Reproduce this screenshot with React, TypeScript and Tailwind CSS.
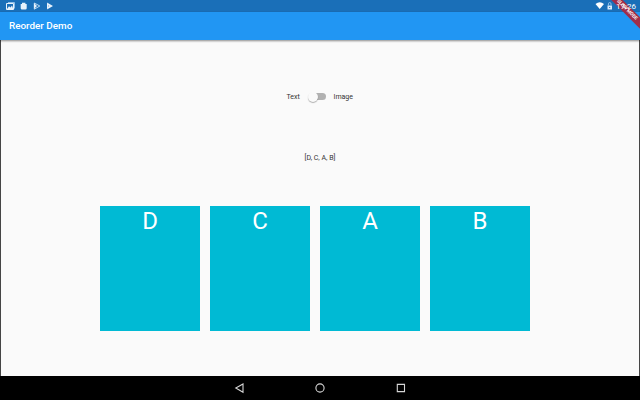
const cards = ["D", "C", "A", "B"];

function StatusBar() {
  return (
    <div className="flex h-3 shrink-0 items-center bg-[#1a6fb8] pl-[5px] text-white">
      <svg width="60" height="12" viewBox="0 0 60 12" fill="#e8f2fb">
        <path d="M3 2.5H9.5V8.5" fill="none" stroke="#8fc0ea" />
        <path d="M1.5 3.5h7v6h-7z" fill="none" stroke="#e8f2fb" />
        <path d="M2 9l2-2.8 1.5 1.2L7 5.5l1.3 3.5z" />
        <path d="M15.7 4h6v4.2q0 1.3-1.3 1.3h-3.4q-1.3 0-1.3-1.3zM17 2.7h3.4V4H17z" />
        <path d="M29.3 3l5.5 3-5.5 3.2z" fill="none" stroke="#b9d9f3" />
        <path d="M29 3l3 3-3 3z" />
        <path d="M42 2.5l6 3.5-6 3.5 1.5-3.5z" />
        <path d="M42.5 3.2v5.6" stroke="#e8f2fb" />
      </svg>
      <svg className="ml-auto" width="20" height="12" viewBox="0 0 20 12" fill="white">
        <path d="M.5 4Q4.7.7 9 4L4.7 9z" />
        <path d="M12.5 5.5h4.5v4h-4.5z" fill="#d9eafa" />
        <path d="M13.4 5.5V3.8q0-1.2 1.3-1.2t1.3 1.2v1.7" fill="none" stroke="#8fc0ea" />
        <path d="M14.2 7h1v1h-1z" fill="#1a6fb8" />
      </svg>
      <span className="relative z-30 mr-[4px] ml-px text-[8px] leading-[13px]">17:26</span>
    </div>
  );
}

function NavigationBar() {
  return (
    <div className="flex h-6 shrink-0 items-center justify-center bg-black">
      <svg width="180" height="24" viewBox="0 0 180 24" fill="none" stroke="#d6d6d6" strokeWidth="1.1">
        <path d="M13 8v8.2L5.8 12z" />
        <circle cx="90" cy="12" r="4.1" />
        <path d="M167.3 8.4h7.2v7.2h-7.2z" />
      </svg>
    </div>
  );
}

export default function App() {
  return (
    <div className="relative flex h-[400px] w-[640px] flex-col overflow-hidden bg-[#fafafa] font-['Roboto',sans-serif] text-[#333]">
      <StatusBar />
      <header className="z-10 flex h-7 shrink-0 items-center bg-[#2196f3] pl-[9px] text-[9.9px] font-medium text-white shadow-[0_1px_2px_rgba(0,0,0,0.45)]">
        Reorder Demo
      </header>
      <main className="flex flex-1 flex-col border-x border-[#454545] pt-[50px]">
        <div className="flex h-3.5 items-center pl-[285.5px] text-[7px]">
          <span className="w-[21px]">Text</span>
          <div className="-mt-px flex h-[10px] w-[19px] items-center">
            <div className="z-10 size-[10px] shrink-0 rounded-full bg-[#fafafa] shadow-[0_1px_1px_rgba(0,0,0,0.3)]" />
            <div className="-ml-1 h-[7px] w-[12.5px] shrink-0 rounded-r-full bg-[#b1b1b1]" />
          </div>
          <span className="ml-[7px]">Image</span>
        </div>
        <div className="mt-[48px] h-3 text-center text-[7px] leading-3">[D, C, A, B]</div>
        <div className="mt-[42px] flex gap-[10px] pl-[99px]">
          {cards.map((letter) => (
            <div key={letter} className="h-[125px] w-[100px] bg-[#00bad4] text-center text-[24px] leading-[30px] text-white">
              {letter}
            </div>
          ))}
        </div>
      </main>
      <NavigationBar />
      <div className="absolute top-[6px] left-[597px] z-20 flex h-2 w-[60px] rotate-45 items-center justify-center bg-[#a02d49] text-[4.7px] font-bold leading-none text-white">
        SLOW MODE
      </div>
    </div>
  );
}
